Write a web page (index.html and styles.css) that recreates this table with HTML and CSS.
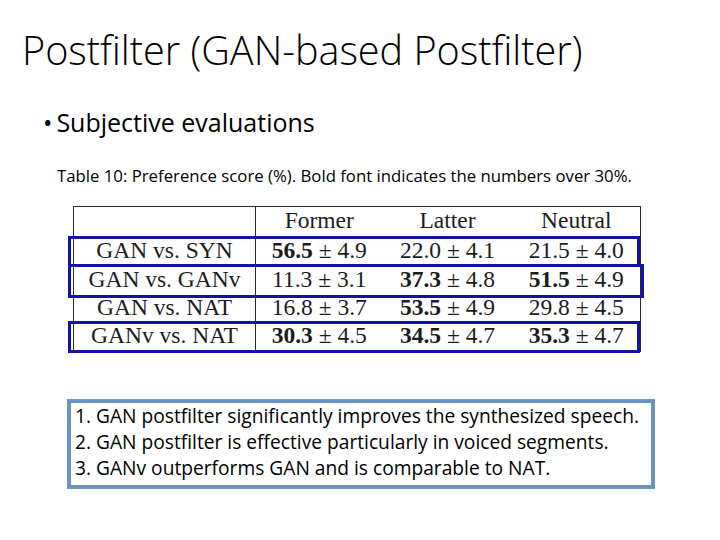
FILE: index.html
```html
<!DOCTYPE html>
<html>
<head>
<meta charset="utf-8">
<link rel="stylesheet" href="styles.css">
</head>
<body>
<div class="slide">
  <h1 class="title">Postfilter (GAN-based Postfilter)</h1>
  <div class="bullet"><span class="dot">•</span><span>Subjective evaluations</span></div>
  <p class="caption">Table 10: Preference score (%). Bold font indicates the numbers over 30%.</p>
  <div class="table-wrap">
    <table class="scores">
      <colgroup>
        <col class="c1"><col class="c2"><col class="c3"><col class="c4">
      </colgroup>
      <thead>
        <tr class="head"><th class="name"></th><th>Former</th><th>Latter</th><th>Neutral</th></tr>
      </thead>
      <tbody>
        <tr class="r1"><td class="name">GAN vs. SYN</td><td><b>56.5</b> ± 4.9</td><td>22.0 ± 4.1</td><td>21.5 ± 4.0</td></tr>
        <tr class="r2"><td class="name">GAN vs. GANv</td><td>11.3 ± 3.1</td><td><b>37.3</b> ± 4.8</td><td><b>51.5</b> ± 4.9</td></tr>
        <tr class="r3"><td class="name">GAN vs. NAT</td><td>16.8 ± 3.7</td><td><b>53.5</b> ± 4.9</td><td>29.8 ± 4.5</td></tr>
        <tr class="r4"><td class="name">GANv vs. NAT</td><td><b>30.3</b> ± 4.5</td><td><b>34.5</b> ± 4.7</td><td><b>35.3</b> ± 4.7</td></tr>
      </tbody>
    </table>
    <div class="hl hl1"></div>
    <div class="hl hl2"></div>
    <div class="hl hl4"></div>
  </div>
  <div class="notes">
    <div>1. GAN postfilter significantly improves the synthesized speech.</div>
    <div>2. GAN postfilter is effective particularly in voiced segments.</div>
    <div>3. GANv outperforms GAN and is comparable to NAT.</div>
  </div>
</div>
</body>
</html>
```
FILE: styles.css
```css
html, body {
  margin: 0;
  padding: 0;
  background: #ffffff;
}
.slide {
  width: 720px;
  height: 540px;
  display: flex;
  flex-direction: column;
  font-family: "Open Sans", "DejaVu Sans", sans-serif;
  color: #000;
  overflow: hidden;
}
.title {
  margin: 26px 0 0 22px;
  font-size: 39.6px;
  line-height: 48px;
  font-weight: 300;
  white-space: nowrap;
}
.bullet {
  margin: 33px 0 0 43px;
  font-size: 25px;
  line-height: 30px;
  display: flex;
  gap: 4px;
}
.dot {
  font-size: 25px;
}
.caption {
  margin: 29px 0 0 57px;
  font-size: 16.75px;
  line-height: 20px;
  white-space: nowrap;
}
.table-wrap {
  position: relative;
  margin: 20px 0 0 73px;
  width: 567px;
}
.scores {
  border-collapse: collapse;
  width: 567px;
  table-layout: fixed;
  border: 1px solid #2a2a2a;
  font-family: "Liberation Serif", "Times New Roman", serif;
  font-size: 23.5px;
  color: #1c1c1c;
}
.c1 { width: 182px; }
.c2 { width: 127px; }
.c3 { width: 130px; }
.c4 { width: 128px; }
.scores th, .scores td {
  padding: 0 0 3px 0;
  text-align: center;
  font-weight: normal;
  white-space: nowrap;
  line-height: 24px;
}
.scores .name {
  border-right: 1px solid #2a2a2a;
}
.scores b {
  font-weight: bold;
}
.head { height: 30px; }
.r1 { height: 29px; }
.r2 { height: 29px; }
.r3 { height: 28px; }
.r4 { height: 29px; }
.hl {
  position: absolute;
  border: 3px solid #1212a4;
  box-sizing: border-box;
  left: -5px;
}
.hl1 { top: 30px; height: 31px; width: 572px; }
.hl2 { top: 58px; height: 34px; width: 576px; }
.hl4 { top: 115px; height: 32px; width: 572px; }
.notes {
  margin: 47px 0 0 67px;
  width: 588px;
  box-sizing: border-box;
  border: 4px solid #6b94c5;
  padding: 0 4px 4px 4px;
  font-size: 19.2px;
  line-height: 26px;
  white-space: nowrap;
}
```
